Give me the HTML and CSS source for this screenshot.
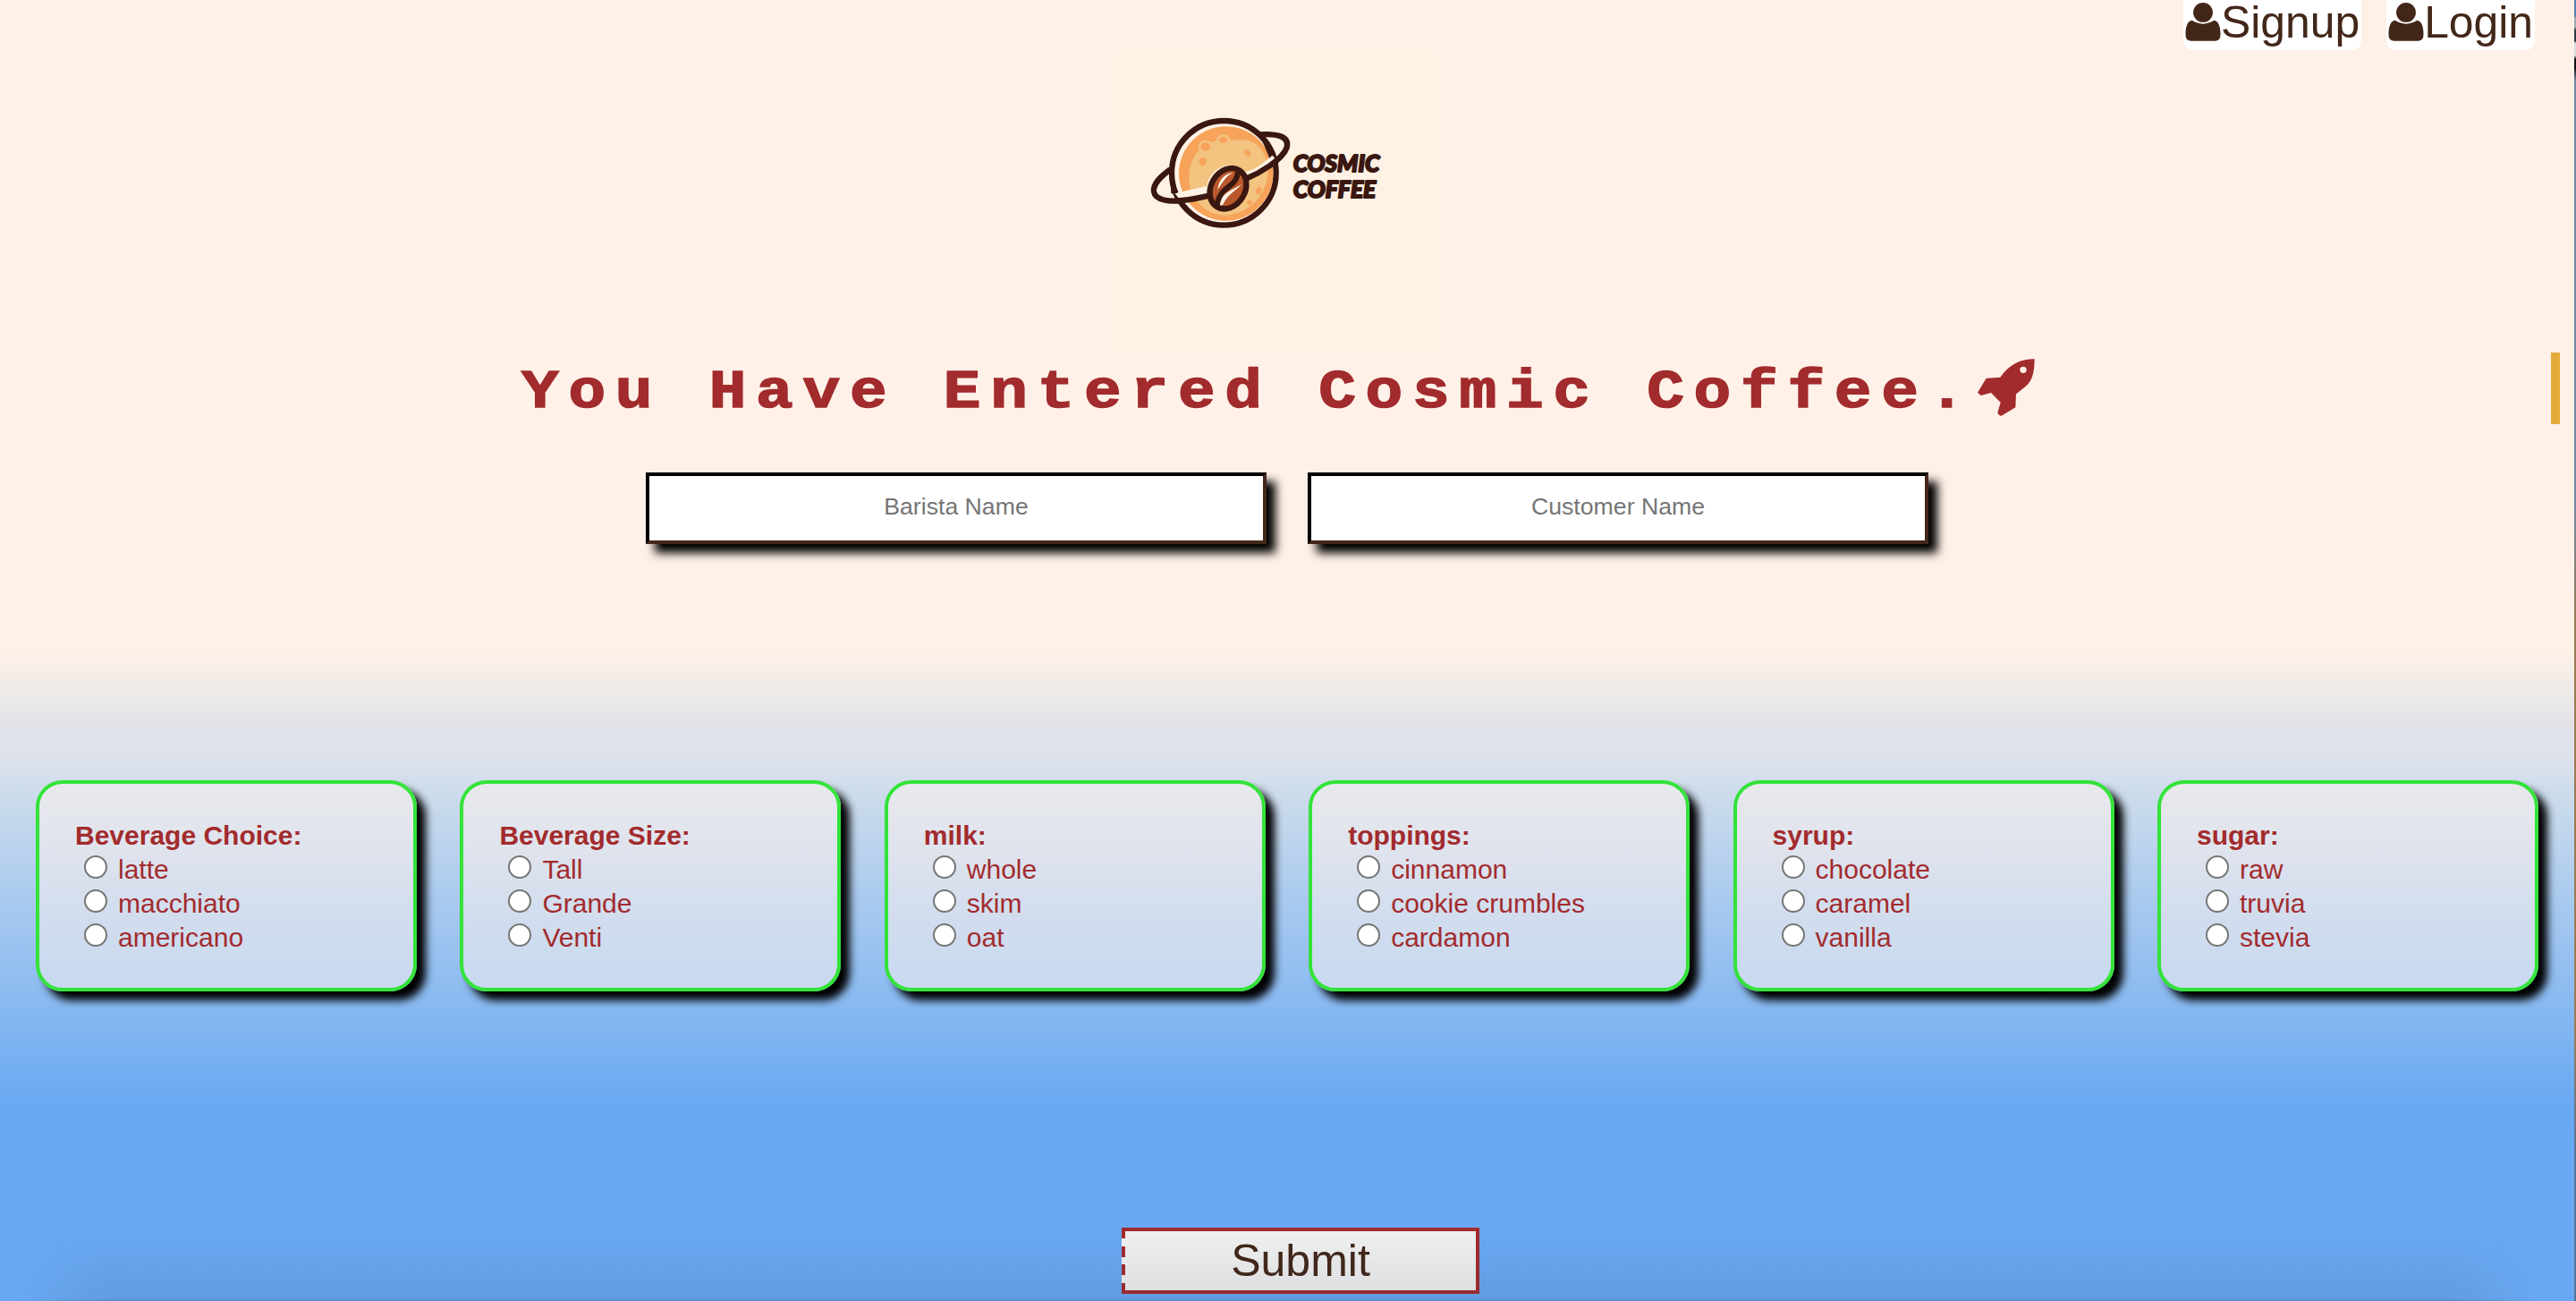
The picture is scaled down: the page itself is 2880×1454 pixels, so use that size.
FILE: index.html
```html
<!DOCTYPE html>
<html lang="en">
<head>
<meta charset="utf-8">
<title>Cosmic Coffee</title>
<link rel="stylesheet" href="styles.css">
</head>
<body>
<div class="page">
  <svg width="0" height="0" class="defs"><defs>
    <symbol id="user" viewBox="0 0 120 130"><circle cx="60" cy="33" r="33"/><path d="M23 60Q60 83 97 60C112 62 119 80 119 108Q119 129 100 129H20Q1 129 1 108C1 80 8 62 23 60Z"/></symbol>
  </defs></svg>
  <nav class="nav">
    <a class="nav-link"><svg class="user"><use href="#user"/></svg>Signup</a>
    <a class="nav-link"><svg class="user"><use href="#user"/></svg>Login</a>
  </nav>
  <header class="brand">
    <svg class="logo" viewBox="0 0 960 510" role="img" aria-label="Cosmic Coffee">
      <circle cx="325" cy="250" r="175" fill="#fff2e6" stroke="#3a1710" stroke-width="19"/>
      <circle cx="332" cy="252" r="158" fill="#f7a35a"/>
      <path d="M208 265C208 185 265 136 330 140C365 140 385 138 405 140C450 150 478 205 472 262C460 340 395 392 325 392C255 388 208 330 208 265Z" fill="#f3c380"/>
      <g fill="#f7a35a"><ellipse cx="263" cy="162" rx="20" ry="18" stroke="#f3c380" stroke-width="8"/><ellipse cx="323" cy="139" rx="18" ry="15" stroke="#f3c380" stroke-width="8"/><ellipse cx="254" cy="212" rx="12" ry="14"/><ellipse cx="404" cy="183" rx="12" ry="9" transform="rotate(40 404 183)"/><ellipse cx="442" cy="309" rx="9" ry="13" transform="rotate(20 442 309)"/><ellipse cx="411" cy="349" rx="9" ry="8"/></g>
      <path d="M486 190C450 225 432 239 395 246C345 195 275 240 268 294L160 318L182 345L275 329L285 360L395 320L400 275C440 265 480 235 506 210Z" fill="#fff2e6"/>
      <path d="M145 238C110 264 87 287 90 312C95 343 145 347 185 342Q225 338 276 326M398 270C445 250 520 207 536 165C546 128 505 117 445 121" fill="none" stroke="#3a1710" stroke-width="19"/>
      <path d="M145 238L148 319L168 318C157 285 159 260 152 238Z" fill="#3a1710"/>
      <path d="M448 128L478 200L494 184Q480 150 462 128Z" fill="#3a1710"/>
      <ellipse cx="339" cy="302" rx="57" ry="72" transform="rotate(31 339 302)" fill="#b9582c" stroke="#3a1710" stroke-width="19"/>
      <path d="M304 306C308 270 332 250 356 249C333 259 323 278 304 306ZM310 359C312 320 347 310 385 288C360 315 340 318 321 357Z" fill="#fff2e6"/>
      <path d="M372 247C367 304 306 291 302 365" fill="none" stroke="#3a1710" stroke-width="18"/>
      <g class="wordmark"><text x="557" y="246" textLength="290" lengthAdjust="spacingAndGlyphs">COSMIC</text><text x="557" y="333" textLength="278" lengthAdjust="spacingAndGlyphs">COFFEE</text></g>
    </svg>
  </header>
  <h1 class="title"><span class="title-text">You Have Entered Cosmic Coffee.</span><svg class="rocket" viewBox="0 0 192 192"><path d="M191 1Q191 72 160 93Q150 102 129 118L127 163L80 191Q72 192 67 181L77 146L45 114L11 123L0 113L29 65L76 62Q119 0 191 1ZM164 37A11 11 0 1 0 142 37A11 11 0 1 0 164 37Z" fill-rule="evenodd"/></svg></h1>
  <form class="order">
    <div class="names">
      <input class="name" type="text" placeholder="Barista Name">
      <input class="name" type="text" placeholder="Customer Name">
    </div>
    <div class="cards">
      <section class="card"><b>Beverage Choice:</b><label><input type="radio" name="bev">latte</label><label><input type="radio" name="bev">macchiato</label><label><input type="radio" name="bev">americano</label></section>
      <section class="card"><b>Beverage Size:</b><label><input type="radio" name="size">Tall</label><label><input type="radio" name="size">Grande</label><label><input type="radio" name="size">Venti</label></section>
      <section class="card"><b>milk:</b><label><input type="radio" name="milk">whole</label><label><input type="radio" name="milk">skim</label><label><input type="radio" name="milk">oat</label></section>
      <section class="card"><b>toppings:</b><label><input type="radio" name="top">cinnamon</label><label><input type="radio" name="top">cookie crumbles</label><label><input type="radio" name="top">cardamon</label></section>
      <section class="card"><b>syrup:</b><label><input type="radio" name="syrup">chocolate</label><label><input type="radio" name="syrup">caramel</label><label><input type="radio" name="syrup">vanilla</label></section>
      <section class="card"><b>sugar:</b><label><input type="radio" name="sugar">raw</label><label><input type="radio" name="sugar">truvia</label><label><input type="radio" name="sugar">stevia</label></section>
    </div>
    <button class="submit" type="button">Submit</button>
  </form>
  <i class="marker"></i><i class="edge"></i><i class="shade"></i>
</div>
</body>
</html>
```
FILE: styles.css
```css
* { box-sizing: border-box; }
body { margin: 0; font-family: "Liberation Sans", Arial, sans-serif; overflow: hidden; }
.page {
  position: relative; height: 1454px; overflow: hidden; display: flex; flex-direction: column;
  background: linear-gradient(#fff1e7 0, #fff1e7 725px, #efebe8 767px, #e2e3e9 811px, #dbe1ec 855px, #cfddeb 880px, #a9caef 1006px, #8abaf1 1116px, #69a8f2 1234px, #69a8f2 100%);
}
.defs { position: absolute; }
.nav { height: 56px; display: flex; justify-content: flex-end; gap: 28px; padding-right: 46px; }
.nav-link {
  height: 56px; padding: 0 2px; display: flex; border-radius: 0 0 10px 10px;
  background: #fff; color: #422719; font-size: 49.800px; line-height: 50px;
}
.user { width: 40px; height: 43px; margin-top: 3px; fill: #422719; }
.brand {
  height: 340px; padding-top: 54px; padding-left: 1260px;
  background: linear-gradient(90deg, transparent 1220px, #fff2e5 1250px, #fff2e5 1600px, transparent 1630px);
}
.logo { display: block; width: 320px; height: 170px; }
.wordmark { font: italic 900 82px Lato, "Liberation Sans", sans-serif; fill: #3a1710; stroke: #3a1710; stroke-width: 6px; stroke-linejoin: round; }
.title {
  margin: 0; height: 132px; padding-left: 583px; display: flex; white-space: nowrap;
  font: bold 62px/86px "Liberation Mono", "Courier New", monospace; color: #a22b2d;
}
.title-text {
  width: 1628px; letter-spacing: 9.6px; transform: scaleX(1.12); transform-origin: left;
  -webkit-text-stroke: 1.500px #a22b2d;
}
.rocket { width: 64px; height: 64px; margin-top: 5px; fill: #a22b2d; }
.order { display: flex; flex-direction: column; }
.names { display: flex; gap: 46px; padding-left: 722px; }
.name {
  width: 694px; height: 80px; padding: 0 2px 3px; border: 4px solid; border-color: #000 #422719 #422719 #000;
  background: #fff; box-shadow: 10px 10px 10px #000; text-align: center; font: 26.67px "Liberation Sans", Arial, sans-serif;
}
.name::placeholder { color: #757575; }
.cards { display: grid; grid-template-columns: repeat(6, 426px); justify-content: space-between; margin-top: 264px; padding: 0 42px 0 40px; }
.card {
  height: 236px; padding: 39px 40px 0; border: 4px solid #33e339; border-radius: 30px;
  background: linear-gradient(#e8e9ec, #dfe3ed 33%, #d3deee 60%, #c8d9f0); box-shadow: 10px 10px 10px #000;
  color: #a22b2d; font-size: 30px; line-height: 38px;
}
.card b, .card label { display: flex; height: 38px; }
.card input {
  appearance: none; width: 26px; height: 26px; margin: 3px 12px 0 10px;
  border: 2px solid #767676; border-radius: 50%; background: #fff;
}
/* The left edge is drawn as four dashes inside the padding box. */
.submit {
  width: 400px; height: 74px; margin: 264px 0 0 1254px; padding: 0 0 0 4px;
  border: 4px solid #a22b2d; border-left: 0; border-radius: 0;
  background:
    linear-gradient(#a22b2d 8px, transparent 8px 17px, #a22b2d 17px 29px, transparent 29px 37px, #a22b2d 37px 49px, transparent 49px 58px, #a22b2d 58px) 0 0 / 4px 100% no-repeat,
    linear-gradient(#f0f0f0, #efefef);
  color: #422719; font: 50px/62px "Liberation Sans", Arial, sans-serif;
}
.marker { position: absolute; left: 2852px; top: 394px; width: 10px; height: 80px; background: #e3aa38; }
.edge { position: absolute; right: 0; top: 0; width: 2px; height: 1454px; background: linear-gradient(#557fae 0 18px, #a3a8ad 20px 30px, #303743 34px 46px, #ddd 48px 62px, #111 66px 76px, #7187a4 90px 560px, #9b7b52 700px 1150px, #53739c 1300px); }
.shade {
  position: absolute; left: 0; right: 0; bottom: 0; height: 80px; pointer-events: none;
  background: linear-gradient(transparent, rgba(40, 55, 75, .03) 35%, rgba(40, 55, 75, .1)); border-bottom: 2px solid rgba(30, 60, 110, .2);
  mask-image: linear-gradient(90deg, transparent 20px, #000 120px calc(100% - 140px), transparent calc(100% - 40px));
}
```
